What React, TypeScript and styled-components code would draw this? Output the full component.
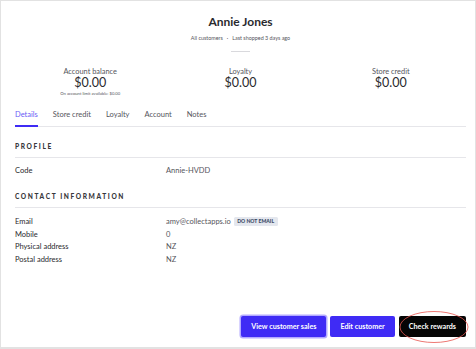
import * as React from 'react';
import styled, { createGlobalStyle } from 'styled-components';

const colors = {
    text: '#2f2f33',
    muted: '#55555c',
    line: '#e6e6ea',
    brand: '#3f2bf5',
    brandLight: '#6b5cf6',
    ring: '#b3aaff',
};

const GlobalStyle = createGlobalStyle`
    html, body {
        margin: 0;
        padding: 0;
        background: #fff;
    }
    body {
        font-family: Lato, "Open Sans", sans-serif;
        color: ${colors.text};
    }
`;

interface Stat {
    label: string;
    value: string;
    note?: string;
}

const stats: Stat[] = [
    { label: 'Account balance', value: '$0.00', note: 'On account limit available: $0.00' },
    { label: 'Loyalty', value: '$0.00' },
    { label: 'Store credit', value: '$0.00' },
];

const tabs = ['Details', 'Store credit', 'Loyalty', 'Account', 'Notes'];

export default function App() {
    return (
        <>
            <GlobalStyle />
            <Frame>
                <Header>
                    <Title>Annie Jones</Title>
                    <Crumbs>
                        <span>All customers</span>
                        <Dot>·</Dot>
                        <span>Last shopped 3 days ago</span>
                    </Crumbs>
                    <ShortRule />
                </Header>

                <Stats>
                    {stats.map(s => (
                        <StatBox key={s.label}>
                            <StatLabel>{s.label}</StatLabel>
                            <StatValue>{s.value}</StatValue>
                            {s.note && <StatNote>{s.note}</StatNote>}
                        </StatBox>
                    ))}
                </Stats>

                <TabBar>
                    {tabs.map((t, i) => (
                        <Tab key={t} active={i === 0}>{t}</Tab>
                    ))}
                </TabBar>

                <Section first>
                    <SectionTitle>Profile</SectionTitle>
                    <Rows>
                        <Row>
                            <Label>Code</Label>
                            <Value>Annie-HVDD</Value>
                        </Row>
                    </Rows>
                </Section>

                <Section>
                    <SectionTitle>Contact information</SectionTitle>
                    <Rows>
                        <Row tall>
                            <Label>Email</Label>
                            <Value>
                                amy@collectapps.io
                                <Badge>Do not email</Badge>
                            </Value>
                        </Row>
                        <Row>
                            <Label>Mobile</Label>
                            <Value>0</Value>
                        </Row>
                        <Row>
                            <Label>Physical address</Label>
                            <Value>NZ</Value>
                        </Row>
                        <Row>
                            <Label>Postal address</Label>
                            <Value>NZ</Value>
                        </Row>
                    </Rows>
                </Section>

                <Footer>
                    <Button variant="focused">View customer sales</Button>
                    <Button variant="primary">Edit customer</Button>
                    <Marked>
                        <Button variant="dark">Check rewards</Button>
                        <Circle viewBox="0 0 70 34" preserveAspectRatio="none">
                            <ellipse cx="35" cy="17" rx="34" ry="15.5" fill="none" stroke="#e8564f" strokeWidth="0.8" />
                        </Circle>
                    </Marked>
                </Footer>
            </Frame>
        </>
    );
}

const Frame = styled.div`
    box-sizing: border-box;
    width: 476px;
    height: 349px;
    border: 1px solid #e2e2e2;
    border-bottom-width: 2px;
    padding: 0 9px 10px 14px;
    display: flex;
    flex-direction: column;
    overflow: hidden;
`;

const Header = styled.div`
    display: flex;
    flex-direction: column;
    align-items: center;
    padding-top: 13px;
`;

const Title = styled.h1`
    margin: 0;
    font-size: 12px;
    line-height: 16px;
    font-weight: 700;
    color: #2a2a2e;
`;

const Crumbs = styled.div`
    margin-top: 4px;
    display: flex;
    align-items: center;
    font-size: 5.4px;
    line-height: 8px;
    color: ${colors.muted};
`;

const Dot = styled.span`
    margin: 0 4px;
`;

const ShortRule = styled.div`
    margin-top: 9px;
    width: 19px;
    height: 1px;
    background: #d9d9dd;
`;

const Stats = styled.div`
    display: grid;
    grid-template-columns: repeat(3, 1fr);
    margin-top: 14.5px;
`;

const StatBox = styled.div`
    display: flex;
    flex-direction: column;
    align-items: center;
`;

const StatLabel = styled.div`
    font-size: 7.4px;
    line-height: 9px;
    color: ${colors.muted};
`;

const StatValue = styled.div`
    font-size: 12.5px;
    line-height: 13px;
    color: #2a2a2e;
`;

const StatNote = styled.div`
    margin-top: 2.5px;
    font-size: 4.2px;
    line-height: 6px;
    color: ${colors.muted};
`;

const TabBar = styled.div`
    display: flex;
    gap: 15px;
    margin-top: 9.5px;
    border-bottom: 1px solid ${colors.line};
`;

const Tab = styled.div<{ active?: boolean }>`
    font-size: 7.5px;
    line-height: 9px;
    padding: 3px 0 6px;
    color: ${p => (p.active ? colors.brandLight : colors.muted)};
    border-bottom: 2px solid ${p => (p.active ? colors.brand : 'transparent')};
    margin-bottom: -1px;
`;

const Section = styled.section<{ first?: boolean }>`
    margin-top: ${p => (p.first ? '14.5px' : '13.5px')};
`;

const SectionTitle = styled.h2`
    margin: 0;
    padding-bottom: 6px;
    border-bottom: 1px solid ${colors.line};
    font-size: 6.6px;
    line-height: 10px;
    font-weight: 900;
    letter-spacing: 1.6px;
    text-transform: uppercase;
    color: #38383c;
`;

const Rows = styled.div`
    padding-top: 7px;
    display: flex;
    flex-direction: column;
`;

const Row = styled.div<{ tall?: boolean }>`
    display: grid;
    grid-template-columns: 151px 1fr;
    align-items: center;
    font-size: 7.5px;
    line-height: 12px;
    height: ${p => (p.tall ? '13.3px' : '12.6px')};
`;

const Label = styled.div`
    color: #2a2a2e;
`;

const Value = styled.div`
    display: flex;
    align-items: center;
    color: ${colors.muted};
`;

const Badge = styled.span`
    margin-left: 3px;
    padding: 0 3.5px;
    height: 8.5px;
    line-height: 8.5px;
    border-radius: 1.5px;
    background: #e4e7ee;
    color: #3a4a66;
    font-size: 5.1px;
    font-weight: 900;
    text-transform: uppercase;
`;

const Footer = styled.div`
    margin-top: auto;
    display: flex;
    justify-content: flex-end;
    align-items: center;
    gap: 4px;
`;

const Button = styled.button<{ variant: 'primary' | 'focused' | 'dark' }>`
    border: none;
    border-radius: 2px;
    height: 21px;
    padding: 0 10px;
    font-family: Lato, sans-serif;
    font-size: 7.2px;
    font-weight: 700;
    color: #fff;
    background: ${p => (p.variant === 'dark' ? '#050505' : colors.brand)};
    box-shadow: ${p => (p.variant === 'focused' ? `0 0 0 1.5px ${colors.ring}` : 'none')};
    margin-left: ${p => (p.variant === 'focused' ? '2px' : '0')};
`;

const Marked = styled.div`
    position: relative;
    display: flex;
`;

const Circle = styled.svg`
    position: absolute;
    left: 0px;
    top: -6px;
    width: 70px;
    height: 34px;
    pointer-events: none;
`;
